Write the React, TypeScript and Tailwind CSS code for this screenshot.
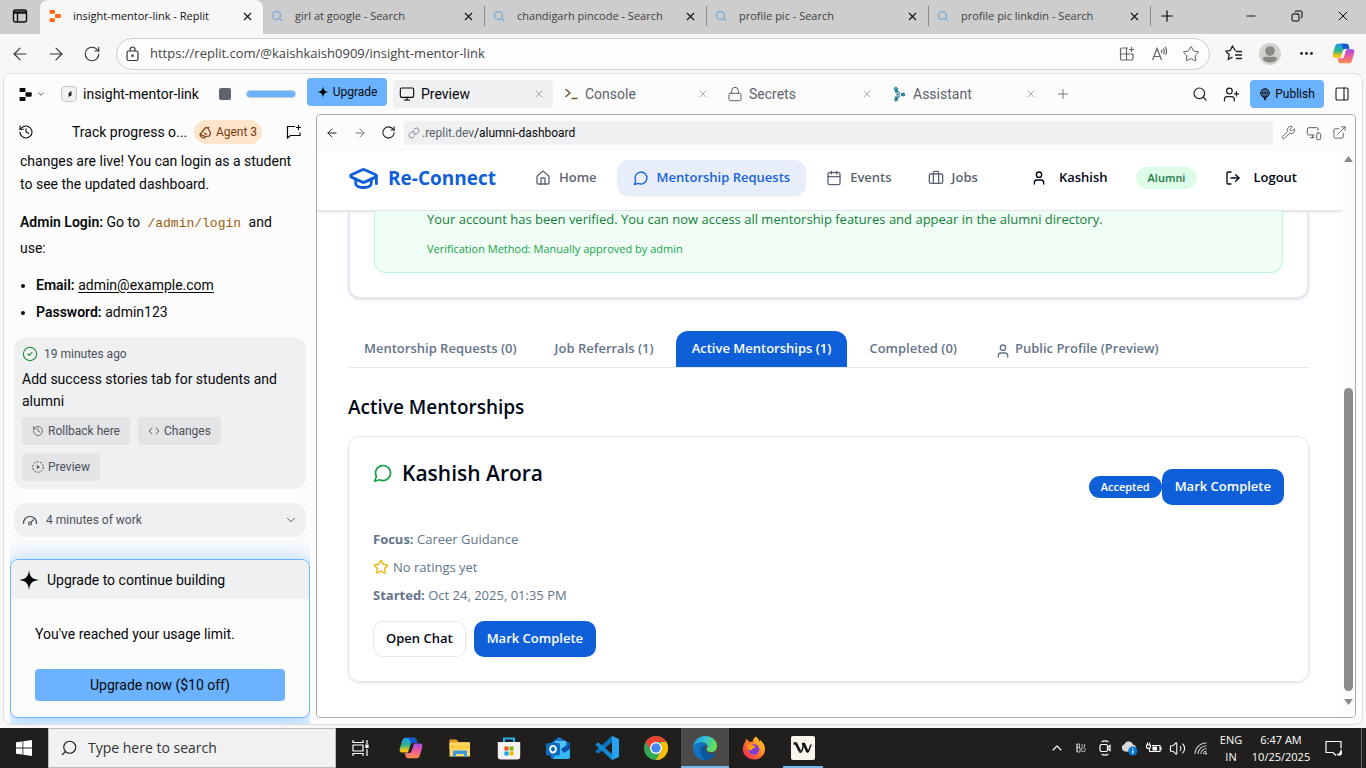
import React from "react";
import {
  ArrowLeft, ArrowRight, Briefcase, Calendar, ChevronDown, ChevronUp, Code, CircleCheck,
  ExternalLink, GraduationCap, History, House, Link, LogOut,
  Minus, Monitor, MonitorSmartphone, PanelRight, Plus, RotateCw, Search, Star, User, UserPlus, Wrench, X,
  Lock, Ellipsis, Volume2, Copy,
} from "lucide-react";

const Copilot = ({ size = 24, id }: { size?: number; id: string }) => (
  <svg width={size} height={size} viewBox="0 0 24 24" aria-hidden="true">
    <defs>
      <linearGradient id={id + "a"} x1="0" y1="0" x2="0" y2="1">
        <stop offset="0" stopColor="#1b9cf0" /><stop offset="0.5" stopColor="#2fb58a" /><stop offset="0.85" stopColor="#f2c518" />
      </linearGradient>
      <linearGradient id={id + "b"} x1="0" y1="0" x2="0" y2="1">
        <stop offset="0" stopColor="#a14be8" /><stop offset="0.5" stopColor="#ee5a9b" /><stop offset="1" stopColor="#fb9149" />
      </linearGradient>
    </defs>
    <path d="M15 1.800c1.300 0 2 .9 2.400 2.200l.9 3h-4.500c-1.400 0-2 .7-2.400 2L9 16.500H3.200C.9 16.500.2 14.600.8 12.500l2.400-8C3.800 2.600 5 1.800 6.700 1.800z" fill={`url(#${id}a)`} />
    <path d="M14.500 1.800c1.600 0 2.400.7 2.900 2.200l.9 3h-4.500c-.8 0-1.500.4-1.900 1L11 4.500c-.4-1.500-1.200-2.700-3-2.700z" fill="#1455d0" />
    <path d="M9 22.200c-1.300 0-2-.9-2.400-2.200l-.9-3h4.500c1.400 0 2-.7 2.400-2L15 7.500h5.800c2.300 0 3 1.900 2.400 4l-2.400 8c-.6 1.900-1.800 2.700-3.500 2.700z" fill={`url(#${id}b)`} />
  </svg>
);

const Spark = ({ size = 12 }: { size?: number }) => (
  <svg width={size} height={size} viewBox="0 0 24 24" aria-hidden="true">
    <path d="M12 0c.9 8 3.500 11 12 12-8.500 1-11.100 4-12 12-.9-8-3.500-11-12-12C8.500 11 11.100 8 12 0z" fill="currentColor" />
  </svg>
);

const ReplitMark = ({ size = 13, color = "#0e1525" }: { size?: number; color?: string }) => (
  <svg width={size} height={size} viewBox="0 0 24 24" aria-hidden="true" fill={color}>
    <rect x="1" y="0" width="11" height="7.500" rx="1.500" />
    <rect x="12" y="8" width="11.500" height="8" rx="1.500" />
    <rect x="1" y="16.500" width="11" height="7.500" rx="1.500" />
  </svg>
);

const ChatBubble = ({ size = 16, color = "currentColor" }: { size?: number; color?: string }) => (
  <svg width={size} height={size} viewBox="0 0 24 24" fill="none" stroke={color} strokeWidth="2" strokeLinecap="round" strokeLinejoin="round" aria-hidden="true">
    <path d="M7.900 20A9 9 0 1 0 4 16.100L2 22Z" />
  </svg>
);

const VerticalTabs = () => (
  <svg width="16" height="16" viewBox="0 0 16 16" fill="none" stroke="#111" aria-hidden="true">
    <rect x="1.500" y="2" width="13" height="12" rx="2" strokeWidth="1.400" />
    <path d="M2 5h12M5.500 5v9" strokeWidth="1.400" /><path d="M2 4h12" strokeWidth="1.500" />
  </svg>
);

const ring = "focus-visible:outline-2 focus-visible:outline-blue-500";

function BrowserTab({ title }: { title: string }) {
  return (
    <div className="flex w-[222px] shrink items-center">
      <div className="flex min-w-0 flex-1 items-center pl-2 pr-[9px]">
        <Search size={12} strokeWidth={3} color="#82aed6" className="shrink-0" />
        <span className="ml-3 min-w-0 flex-1 truncate text-[11px] text-[#3f3f3f]">{title}</span>
        <button aria-label={`Close ${title}`} className={ring}><X size={13} strokeWidth={2} color="#111" /></button>
      </div>
      <span className="h-5 w-px bg-[#8a8a8a]" />
    </div>
  );
}

function BrowserChrome() {
  return (
    <header className="shrink-0 font-['Open_Sans',sans-serif]">
      <div className="flex h-[34px] bg-[#cdcdcd] pb-0.5">
        <button aria-label="Tab actions" className={`flex w-10 items-center justify-center ${ring}`}><VerticalTabs /></button>
        <div className="-mb-0.5 flex w-[223px] items-center rounded-t-lg bg-[#f7f7f7] pb-0.5 pl-[9px] pr-[9px]">
          <ReplitMark size={12} color="#ff6a13" />
          <span className="ml-3 min-w-0 flex-1 truncate text-[11px] text-[#111]">insight-mentor-link - Replit</span>
          <button aria-label="Close tab" className={ring}><X size={13} strokeWidth={2} color="#111" /></button>
        </div>
        <BrowserTab title="girl at google - Search" />
        <BrowserTab title="chandigarh pincode - Search" />
        <BrowserTab title="profile pic - Search" />
        <BrowserTab title="profile pic linkdin - Search" />
        <button aria-label="New tab" className="flex w-8 items-center justify-center"><Plus size={18} strokeWidth={1.5} /></button>
        <div className="ml-auto flex">
          <button aria-label="Minimize" className="flex w-[46px] items-center justify-center"><Minus size={14} strokeWidth={1.5} /></button>
          <button aria-label="Restore" className="flex w-[46px] items-center justify-center"><Copy size={12} strokeWidth={2} className="-scale-x-100" /></button>
          <button aria-label="Close window" className="flex w-[46px] items-center justify-center"><X size={16} strokeWidth={1.4} /></button>
        </div>
      </div>
      <div className="flex h-[39px] items-center bg-[#f7f7f7] pl-0.5 pr-1 text-[#333]">
        <button aria-label="Back" className="flex w-9 justify-center"><ArrowLeft size={20} strokeWidth={1.4} /></button>
        <button aria-label="Forward" className="flex w-9 justify-center"><ArrowRight size={20} strokeWidth={1.4} /></button>
        <button aria-label="Reload" className="flex w-9 justify-center"><RotateCw size={18} strokeWidth={1.5} /></button>
        <div className="ml-1.5 flex h-8 min-w-0 flex-1 items-center rounded-full border border-[#cfcfcf] bg-[#fdfdfd] pl-2">
          <svg width="15" height="16" viewBox="0 0 15 16" fill="none" stroke="#333" strokeWidth="1.200" aria-hidden="true">
            <rect x="2" y="5" width="11" height="9.500" rx="1.800" /><path d="M5 5V3.500a2.500 2.500 0 0 1 5 0V5" /><circle cx="7.500" cy="9.700" r=".7" fill="#333" />
          </svg>
          <input aria-label="Address" defaultValue="https://replit.com/@kaishkaish0909/insight-mentor-link" className="ml-[10px] min-w-0 flex-1 bg-transparent text-[13px] text-[#444] outline-none" />
          <button aria-label="Split screen" className="flex w-8 justify-center">
            <svg width="16" height="16" viewBox="0 0 16 16" fill="none" stroke="#666" strokeWidth="1.200"><path d="M9 2H3a1.500 1.500 0 0 0-1.500 1.500v9A1.500 1.500 0 0 0 3 14h9.500a1.500 1.500 0 0 0 1.500-1.500V8H1.500M7.500 2v12M12.500 1v5M10 3.500h5" /></svg>
          </button>
          <button aria-label="Read aloud" className="flex w-8 justify-center">
            <svg width="17" height="16" viewBox="0 0 17 16" fill="none" stroke="#666" strokeWidth="1.200"><path d="M1.500 14L6 2.500 10.500 14M3 10.500h6M10 4c1 .7 1 2.300.3 3M12 2.500c1.600 1.300 1.600 4.200.5 5.500M14 1c2 2 2 6 .6 8" /></svg>
          </button>
          <button aria-label="Add to favorites" className="flex w-8 justify-center"><Star size={18} strokeWidth={1.3} color="#555" /></button>
          <span className="w-0.5" />
        </div>
        <button aria-label="Favorites" className="ml-1.5 flex w-9 justify-center">
          <svg width="18" height="17" viewBox="0 0 18 17" fill="none" stroke="#222" strokeWidth="1.300"><path d="M10.500 6L7.500 1 5.300 5.500.9 6.200l3.200 3.300-.8 4.900 4.200-2.200M11 6.500h6M10 10h7M11 13.500h6" /></svg>
        </button>
        <button aria-label="Profile" className="flex w-9 justify-center">
          <svg width="22" height="22" viewBox="0 0 22 22"><circle cx="11" cy="11" r="11" fill="#d4d2cf" /><circle cx="11" cy="8" r="4.800" fill="#8b8782" /><path d="M4 15.500c0-1 .8-1.700 1.800-1.700h10.400c1 0 1.800.7 1.800 1.700 0 2-3 4-7 4s-7-2-7-4z" fill="#8b8782" /></svg>
        </button>
        <button aria-label="Settings and more" className="flex w-9 justify-center"><Ellipsis size={17} strokeWidth={2.2} color="#222" /></button>
        <button aria-label="Copilot" className="flex w-[38px] justify-center"><Copilot size={23} id="cpa" /></button>
      </div>
    </header>
  );
}

function WorkspaceTab({ icon, label, active }: { icon: React.ReactNode; label: string; active?: boolean }) {
  return (
    <div className={`flex h-7 w-40 items-center rounded pl-1.5 pr-2 ${active ? "bg-[#eff0f2] text-[#07080a]" : "text-[#5d626b]"}`}>
      <span className="flex w-4 shrink-0 justify-center">{icon}</span>
      <span className="ml-1.5 flex-1 text-sm">{label}</span>
      <button aria-label={`Close ${label}`}><X size={12} strokeWidth={1.5} color="#8b8f96" /></button>
    </div>
  );
}

function WorkspaceHeader() {
  return (
    <div className="flex h-10 shrink-0 items-center">
      <div className="flex w-[303px] shrink-0 items-center pl-[15px]">
        <button aria-label="Replit menu" className="flex items-center">
          <ReplitMark size={13} color="#07080a" />
          <ChevronDown size={10} strokeWidth={2} color="#444" className="ml-1" />
        </button>
        <span className="ml-[15px] flex h-4 w-4 items-center justify-center rounded border border-[#c5c8cd] bg-[#f0f1f2]">
          <svg width="10" height="10" viewBox="0 0 10 10" aria-hidden="true"><path d="M1.500 3L6 2v6L2 7z" fill="#fff" /><path d="M4.500 4L7.500 2v4.500L4.500 8z" fill="#222" /></svg>
        </span>
        <span className="ml-1.5 w-[121px] text-sm text-[#07080a]">insight-mentor-link</span>
        <button aria-label="Stop" className="ml-[15px] h-3 w-3 rounded-xs bg-[#5d626b]" />
        <span className="ml-[15px] h-2 w-[50px] rounded-full border border-[#c3cad3] bg-[#6bb3ff]" />
      </div>
      <button className="mb-1 flex h-7 w-20 items-center justify-center gap-1 rounded bg-[#6bb3ff] text-xs text-[#07080a]"><Spark size={12} />Upgrade</button>
      <div className="ml-1.5 flex gap-1">
        <WorkspaceTab active label="Preview" icon={<Monitor size={16} strokeWidth={1.7} />} />
        <WorkspaceTab label="Console" icon={<svg width="14" height="12" viewBox="0 0 14 12" fill="none" stroke="#6b5a22" strokeWidth="1.400"><path d="M1.500 1l4.500 4-4.500 4M7.500 10.500h6" /></svg>} />
        <WorkspaceTab label="Secrets" icon={<Lock size={16} strokeWidth={1.5} />} />
        <WorkspaceTab label="Assistant" icon={
          <svg width="13" height="17" viewBox="0 0 13 17" fill="#2f8594" stroke="#2f8594"><path d="M1.500 1.500L4.500 2l1 3.500 6 3-6 3-1 3.500-3 .5V12l2-3.500-2-3.500z" stroke="none" /><circle cx="2.800" cy="2.800" r="1.500" fill="#49b3c4" /><circle cx="10.300" cy="8.500" r="1.500" /><circle cx="4.600" cy="8.500" r="1.700" stroke="#fcfcfc" strokeWidth=".9" /><path d="M7.500 5.500v6" stroke="#fcfcfc" strokeWidth=".9" /></svg>} />
      </div>
      <button aria-label="New workspace tab" className="ml-[10px]"><Plus size={16} strokeWidth={1.5} color="#777b82" /></button>
      <div className="ml-auto flex items-center pr-3 text-[#1c1e22]">
        <button aria-label="Search"><Search size={16} strokeWidth={1.8} /></button>
        <button aria-label="Invite" className="ml-[15px]"><UserPlus size={17} strokeWidth={1.7} /></button>
        <button className="ml-[10px] flex h-7 w-[74px] items-center justify-center gap-1 rounded bg-[#6bb3ff] text-xs text-[#07080a]">
          <svg width="12" height="13" viewBox="0 0 12 13" fill="none" stroke="#07080a" aria-hidden="true"><circle cx="6" cy="5" r="4.300" /><path d="M1.700 5h8.600M6 .7v11.600M3.500 5.500L6 12l2.500-6.500M4 1.500v4M8 1.500v4" strokeWidth=".9" /></svg>
          Publish
        </button>
        <button aria-label="Toggle panel" className="ml-[10px]"><PanelRight size={16} strokeWidth={1.7} /></button>
      </div>
    </div>
  );
}

const chip = "flex h-7 items-center gap-1 rounded bg-[#e3e4e6] px-[10px] text-xs text-[#4b5058]";

function AgentPanel() {
  return (
    <aside aria-label="Agent" className="flex w-[312px] shrink-0 flex-col overflow-hidden text-sm text-[#07080a]">
      <div className="flex h-9 shrink-0 items-center pl-3.5 pr-3.5">
        <button aria-label="History"><History size={16} strokeWidth={1.6} /></button>
        <span className="ml-[38px] w-[122px] truncate">Track progress o...</span>
        <span className="flex h-6 w-[68px] items-center justify-center gap-1 rounded-full bg-[#ffe4cc] text-xs text-[#733b0a]">
          <svg width="13" height="13" viewBox="0 0 13 13" fill="none" stroke="#733b0a" strokeWidth="1.200"><path d="M1 8.500L5.500 3C6 1.500 8 1 9 2.500l2.500 4-1 3.500-4 .5zM1 8.500c.5 2.500 2 3.500 4.500 3.500l1-1.500M9 2.500l1-1.500M5 7l3 1.500" /></svg>
          Agent 3
        </span>
        <button aria-label="New chat" className="ml-auto">
          <svg width="16" height="16" viewBox="0 0 16 16" fill="none" stroke="#07080a" strokeWidth="1.200"><path d="M9 2.500H1.500v11.500l3-2.500H14V8.500M12.500 1v5M10 3.500h5" /></svg>
        </button>
      </div>
      <div className="flex min-h-0 flex-1 flex-col px-[10px]">
        <div className="shrink-0 pl-1.5">
          <p className="w-[280px] leading-[23px]">changes are live! You can login as a student to see the updated dashboard.</p>
          <p className="mt-3.5 leading-[25px]"><b className="font-semibold">Admin Login:</b> Go to <code className="px-1 font-['Liberation_Mono',monospace] text-[13px] text-[#a05a0a]">/admin/login</code> and<br />use:</p>
          <ul className="mt-[11px] list-disc pl-4 leading-[27px]">
            <li><b className="font-semibold">Email:</b> <a href="mailto:admin@example.com" className="underline underline-offset-2">admin@example.com</a></li>
            <li><b className="font-semibold">Password:</b> admin123</li>
          </ul>
        </div>
        <section className="mt-[11px] shrink-0 rounded-xl bg-[#eff0f2] p-2">
          <div className="flex h-[18px] items-center gap-1.5 text-xs text-[#4b5058]"><CircleCheck size={16} strokeWidth={1.6} color="#1c8a34" />19 minutes ago</div>
          <p className="mb-[5px] mt-[5px] leading-[22px]">Add success stories tab for students and alumni</p>
          <div className="flex flex-wrap gap-2">
            <button className={chip}><History size={12} strokeWidth={1.6} />Rollback here</button>
            <button className={chip}><Code size={12} strokeWidth={1.8} />Changes</button>
            <button className={chip}>
              <svg width="12" height="12" viewBox="0 0 12 12" fill="none" stroke="#4b5058" aria-hidden="true"><circle cx="6" cy="6" r="5.300" strokeDasharray="2 1.300" /><path d="M4.800 4v4L8 6z" fill="#4b5058" stroke="none" /></svg>
              Preview
            </button>
          </div>
        </section>
        <button className="mt-3.5 flex h-[34px] shrink-0 items-center rounded-xl bg-[#eff0f2] px-2 text-xs text-[#4b5058]">
          <svg width="16" height="16" viewBox="0 0 16 16" fill="none" stroke="#4b5058" strokeWidth="1.200" aria-hidden="true"><path d="M1.500 12A6.500 6.500 0 0 1 8 4.500 6.500 6.500 0 0 1 14.500 12" /><circle cx="8" cy="11.500" r="1.500" /><path d="M9 10.300L11.500 7.500" /></svg>
          <span className="ml-2 flex-1 text-left">4 minutes of work</span><ChevronDown size={14} strokeWidth={1.6} />
        </button>
      </div>
      <div className="mx-1.5 shrink-0 overflow-hidden pb-1.5 pt-[22px]">
        <section className="overflow-hidden rounded-lg border border-[#6bb3ff] bg-[#fcfcfc] shadow-[0_4px_22px_4px_#6bb3ff90]">
          <h2 className="flex h-[39px] items-center gap-2 bg-[#eff0f2] pl-2"><Spark size={20} />Upgrade to continue building</h2>
          <div className="p-6 pb-4">
            <p className="leading-[22px]">You've reached your usage limit.</p>
            <button className="mt-6 h-8 w-full rounded bg-[#6bb3ff]">Upgrade now ($10 off)</button>
          </div>
        </section>
      </div>
    </aside>
  );
}

const navItem = "flex h-9 items-center gap-2 rounded-xl px-4";

function SiteNav() {
  return (
    <nav className="flex h-[61px] shrink-0 items-center justify-between border-b border-[#e2e6ee] bg-white pb-1 pl-[31px] pr-[33px] text-[13px] font-semibold text-[#5b6472] shadow-sm">
      <div className="flex items-center">
        <a href="#home" className="flex w-[171px] items-center gap-[9px] text-[19px] font-bold text-[#0f5fd9]"><GraduationCap size={31} strokeWidth={2.2} />Re-Connect</a>
        <div className="flex gap-1">
          <a href="#home" className={navItem}><House size={16} />Home</a>
          <a href="#mentorship" className={`${navItem} bg-[#e7eefa] text-[#1763da] shadow-xs`}><ChatBubble size={16} />Mentorship Requests</a>
          <a href="#events" className={navItem}><Calendar size={16} />Events</a>
          <a href="#jobs" className={navItem}><Briefcase size={16} />Jobs</a>
        </div>
      </div>
      <div className="flex items-center text-[#020817]">
        <button className="flex items-center gap-3"><User size={16} />Kashish</button>
        <span className="ml-7 rounded-full bg-[#dcfce7] px-3 text-[11px] leading-[22px] text-[#247a45]">Alumni</span>
        <button className="ml-7 flex items-center gap-3 pr-3"><LogOut size={16} />Logout</button>
      </div>
    </nav>
  );
}

const tab = "flex h-9 items-center rounded-t-xl px-4";
const primary = "h-9 rounded-[10px] bg-[#0f5fd9] px-[13px] text-[13px] font-semibold text-white";

function Dashboard() {
  return (
    <main className="min-h-0 flex-1 overflow-hidden pl-[31px] pr-[33px]">
      <section className="rounded-b-xl border-2 border-t-0 border-[#e2e8f0] px-6 pb-6 shadow-sm">
        <div className="rounded-b-xl border border-t-0 border-[#bbf7d0] bg-[#f0fdf4] pb-3.5 pl-[52px]">
          <p className="pb-[13px] text-[13px] leading-4 text-[#15803d]">Your account has been verified. You can now access all mentorship features and appear in the alumni directory.</p>
          <p className="text-[11px] leading-[18px] text-[#16a34a]">Verification Method: Manually approved by admin</p>
        </div>
      </section>
      <div role="tablist" className="mt-8 flex gap-1.5 border-b border-[#e2e8f0] text-[13px] font-semibold text-[#64748b]">
        <button role="tab" className={tab}>Mentorship Requests (0)</button>
        <button role="tab" className={tab}>Job Referrals (1)</button>
        <button role="tab" aria-selected="true" className={`${tab} bg-[#0f5fd9] text-white`}>Active Mentorships (1)</button>
        <button role="tab" className={tab}>Completed (0)</button>
        <button role="tab" className={`${tab} gap-1`}><User size={16} className="mt-1" />Public Profile (Preview)</button>
      </div>
      <h2 className="mt-[25px] text-[19px] font-semibold leading-7 text-[#020817]">Active Mentorships</h2>
      <article className="mt-[15px] rounded-xl border border-[#e2e8f0] px-6 pb-6 pt-[18px] shadow-sm">
        <div className="flex h-[70px] items-start justify-between">
          <h3 className="flex items-center gap-[9px] text-[21px] font-semibold leading-9 text-[#020817]"><ChatBubble size={20} color="#16a34a" />Kashish Arora</h3>
          <div className="mt-3.5 flex items-center">
            <span className="rounded-full bg-[#0f5fd9] px-3 text-[11px] font-semibold leading-[22px] text-white">Accepted</span>
            <button className={primary}>Mark Complete</button>
          </div>
        </div>
        <div className="text-[13px] leading-7 text-[#64748b]">
          <p><b>Focus:</b> Career Guidance</p>
          <p className="flex items-center gap-1"><Star size={16} color="#eab308" />No ratings yet</p>
          <p><b>Started:</b> Oct 24, 2025, 01:35 PM</p>
        </div>
        <div className="mt-3 flex gap-2">
          <button className="h-9 rounded-[10px] border border-[#e2e8f0] px-3 text-[13px] font-semibold text-[#020817]">Open Chat</button>
          <button className={primary}>Mark Complete</button>
        </div>
      </article>
    </main>
  );
}

function PreviewPane() {
  return (
    <section aria-label="Preview" className="mb-1.5 mr-1.5 flex min-w-0 flex-1 flex-col overflow-hidden rounded border border-[#a9abae]">
      <div className="flex h-[35px] shrink-0 items-center bg-[#fcfcfc] pl-2 pr-2 text-[#1c1e22]">
        <button aria-label="Preview back"><ArrowLeft size={14} strokeWidth={1.7} /></button>
        <button aria-label="Preview forward" className="ml-3.5"><ArrowRight size={14} strokeWidth={1.7} color="#777b82" /></button>
        <button aria-label="Preview reload" className="ml-3.5"><RotateCw size={15} strokeWidth={1.7} /></button>
        <div className="ml-2 flex h-6 min-w-0 flex-1 items-center rounded bg-[#eff0f2] pl-1 text-xs">
          <Link size={12} strokeWidth={1.8} color="#777b82" />
          <span className="ml-0.5 text-[#5d626b]">.replit.dev</span><span className="text-[#07080a]">/alumni-dashboard</span>
        </div>
        <div className="ml-2 flex gap-[10px] text-[#5d626b]">
          <button aria-label="Developer tools"><Wrench size={15} strokeWidth={1.5} /></button>
          <button aria-label="Device size"><MonitorSmartphone size={16} strokeWidth={1.5} /></button>
          <button aria-label="Open in new tab"><ExternalLink size={15} strokeWidth={1.5} /></button>
        </div>
      </div>
      <div className="flex min-h-0 flex-1 bg-white font-['Open_Sans',sans-serif]">
        <div className="flex min-w-0 flex-1 flex-col"><SiteNav /><Dashboard /></div>
        <div className="flex w-[13px] shrink-0 flex-col items-center bg-[#fcfcfc] py-1.5 text-[#8b8b8b]" aria-hidden="true">
          <svg width="9" height="6" viewBox="0 0 9 6"><path d="M4.500 0L9 6H0z" fill="currentColor" /></svg>
          <span className="grow-[226]" />
          <span className="w-[9px] grow-[302] rounded-full bg-[#8b8b8b]" />
          <span className="h-2" />
          <svg width="9" height="6" viewBox="0 0 9 6"><path d="M4.500 6L9 0H0z" fill="currentColor" /></svg>
          <span className="h-1.5" />
        </div>
      </div>
    </section>
  );
}

const Explorer = () => (
  <svg width="24" height="24" viewBox="0 0 24 24"><path d="M1.500 3.500h7l2 2.500h11v4h-20z" fill="#e6a21a" /><path d="M1.500 6.500h20.500v14H1.500z" fill="#ffd76a" /><path d="M5 14.500h14v6.500h-3v-3H8v3H5z" fill="#3b9be0" /><path d="M1.500 9h20.500v4H1.500z" fill="#ffcb45" /></svg>
);
const Store = () => (
  <svg width="24" height="24" viewBox="0 0 24 24"><path d="M7 7V2.500h10V7" fill="none" stroke="#27b1ec" strokeWidth="2" /><path d="M.8 6h22.400v14.500a3 3 0 0 1-3 3H3.800a3 3 0 0 1-3-3z" fill="#f3f3f3" /><path d="M7.500 10.500h4v4h-4z" fill="#f25022" /><path d="M12.500 10.500h4v4h-4z" fill="#7fba00" /><path d="M7.500 15.500h4v4h-4z" fill="#00a4ef" /><path d="M12.500 15.500h4v4h-4z" fill="#ffb900" /></svg>
);
const Outlook = () => (
  <svg width="24" height="24" viewBox="0 0 24 24"><path d="M5 7l8-6 10 6v14a2 2 0 0 1-2 2H7a2 2 0 0 1-2-2z" fill="#1a6fd0" /><path d="M9 5h11v9H9z" fill="#4cc2f5" /><path d="M13 14l11-7v14a2 2 0 0 1-2 2H7z" fill="#35b8f1" /><path d="M15 13l9-6v6l-6 4z" fill="#0b4fa8" /><rect y="7" width="14" height="12.500" rx="1.500" fill="#0f6cbd" /><ellipse cx="7" cy="13.200" rx="2.900" ry="3.300" fill="none" stroke="#fff" strokeWidth="1.900" /></svg>
);
const VsCode = () => (
  <svg width="24" height="24" viewBox="0 0 24 24"><path d="M17 0l7 3v18l-7 3z" fill="#29a3f0" /><path d="M17 0v6L3.200 17.700.3 15.200z" fill="#0b74bd" /><path d="M17 24v-6L3.200 6.300.3 8.800z" fill="#1489d4" /></svg>
);
const Chrome = () => (
  <svg width="24" height="24" viewBox="0 0 24 24"><circle cx="12" cy="12" r="12" fill="#34a853" /><path d="M1.600 6A12 12 0 0 1 22.400 6H12L7 15z" fill="#ea4335" /><path d="M22.400 6A12 12 0 0 1 12 24l5-9V6z" fill="#fbbc05" /><circle cx="12" cy="12" r="6" fill="#fff" /><circle cx="12" cy="12" r="4.700" fill="#4285f4" /></svg>
);
const Edge = () => (
  <svg width="24" height="24" viewBox="0 0 24 24">
    <defs><linearGradient id="eg" x1="0" y1="0" x2="1" y2=".3"><stop offset="0" stopColor="#1b8fe0" /><stop offset=".5" stopColor="#2fc2d8" /><stop offset="1" stopColor="#66dd5a" /></linearGradient></defs>
    <path d="M12 0c7 0 12 4.500 12 10 0 4-3 6-6 6-2.500 0-4.500-1-4.500-2.500 0-1 1-1.200 1-3C14.500 8 12 6.500 9 6.500 5 6.500 1 9 0 13 0 5 5 0 12 0z" fill="url(#eg)" />
    <path d="M0 12.500C.5 9 4 6.500 8.500 6.500c3.500 0 5.500 2 5.900 3.500C10 8.500 7.500 11 7.500 14.500c0 5 5 9 12 5.500-2 3-5 4-7.500 4C5 24 0 19 0 12.500z" fill="#1173c4" />
    <path d="M7.500 14.500c0-3 2-5 5-5.500-2 2-.5 9 6.500 9 1.500 0 3-.5 3.800-.7C20 22 17 24 13 24c-3.500-1.500-5.500-5.500-5.500-9.500z" fill="#0c56a0" />
  </svg>
);
const Firefox = () => (
  <svg width="24" height="24" viewBox="0 0 24 24">
    <defs><linearGradient id="ff" x1="1" y1="0" x2="0" y2="1"><stop offset="0" stopColor="#ffe226" /><stop offset=".5" stopColor="#ff7a2c" /><stop offset="1" stopColor="#e8185c" /></linearGradient></defs>
    <path d="M14 .5c1.500 1.500 3 3 3.500 5 1-.5 1-1.500 1-1.500 3 3 4.500 6 4.500 9.500C23 19 18 23.500 12 23.500S.8 19 .8 13C.8 10 2 7.500 3.500 5.500L4 2.500 7.500 6c1-.3 2-.2 3 .2 0-2 1.500-4.500 3.500-5.700z" fill="url(#ff)" />
    <circle cx="12" cy="13.500" r="5.200" fill="#7b3fd6" /><path d="M5 9.500c2-1.500 5.500-1 7 .5 1.500 0 2 .8 1 1.500-2 .5-3 1-3 2.500-2 1-5-1-5-4.500z" fill="#ff9a1f" />
  </svg>
);
const WApp = () => (
  <svg width="24" height="24" viewBox="0 0 24 24"><rect width="24" height="24" rx="2" fill="#faf4ec" /><path d="M2.500 7.500h2.500L9 15.500" fill="none" stroke="#111" strokeWidth="2.600" /><path d="M8.500 16c2 .8 2.500-.5 4-7.500" fill="none" stroke="#111" strokeWidth="1.400" /><path d="M11 8h2l3.500 8" fill="none" stroke="#111" strokeWidth="2.600" /><path d="M16 16c3 .5 2-6 4.500-7.500" fill="none" stroke="#111" strokeWidth="1.400" /></svg>
);

function Taskbar() {
  const apps = [
    { name: "Copilot", icon: <Copilot size={24} id="cpb" /> },
    { name: "File Explorer", icon: <Explorer /> },
    { name: "Microsoft Store", icon: <Store /> },
    { name: "Outlook", icon: <Outlook /> },
    { name: "Visual Studio Code", icon: <VsCode /> },
    { name: "Chrome", icon: <Chrome /> },
    { name: "Edge", icon: <Edge />, state: "active" },
    { name: "Firefox", icon: <Firefox /> },
    { name: "Workspace", icon: <WApp />, state: "open" },
  ];
  const cell = "flex w-6 justify-center";
  return (
    <footer className="flex h-10 shrink-0 items-stretch bg-[#201f1d] font-['Open_Sans',sans-serif] text-white">
      <button aria-label="Start" className="flex w-12 items-center justify-center">
        <svg width="16" height="16" viewBox="0 0 16 16" fill="#fff"><path d="M0 2.300L6.500 1.400V7.600H0zM7.300 1.300L16 0v7.600H7.300zM0 8.400h6.500v6.200L0 13.700zM7.300 8.400H16V16l-8.700-1.300z" /></svg>
      </button>
      <label className="flex w-72 items-center border border-[#bdbdbd] bg-[#f1f1f1] pl-[11px] text-[#222]">
        <Search size={18} strokeWidth={1.5} className="-scale-x-100" />
        <input aria-label="Search" placeholder="Type here to search" className="ml-[10px] min-w-0 flex-1 bg-transparent text-sm outline-none placeholder:text-[#333]" />
      </label>
      <button aria-label="Task view" className="flex w-12 items-center justify-center">
        <svg width="17" height="16" viewBox="0 0 17 16" fill="none" stroke="#fff" strokeWidth="1.200"><path d="M1 0v2.500h10V0M1 16v-2.500h10V16M1 5h10v6H1zM15 0v4M15 9v7" /><path d="M14 5h2v2.500h-2z" fill="#fff" /></svg>
      </button>
      <div className="ml-[3px] flex gap-px">
        {apps.map((a) => (
          <button key={a.name} aria-label={a.name} className={`flex w-12 shrink-0 flex-col items-center ${a.state === "active" ? "bg-[#4b4a49]" : ""}`}>
            <span className="mt-2">{a.icon}</span>
            {a.state && <span className={`mt-auto h-0.5 bg-[#76b9ed] ${a.state === "active" ? "w-full" : "w-10"}`} />}
          </button>
        ))}
      </div>
      <div className="ml-auto flex items-center">
        <button aria-label="Show hidden icons" className={cell}><ChevronUp size={16} strokeWidth={1.7} /></button>
        <span className={cell}>
          <svg width="10" height="10" viewBox="0 0 10 10" fill="none" stroke="#ccc" strokeWidth=".9"><path d="M1 1h2.500v3.500H1zM1 4.500h3V9H1zM1 1v8M6 1v3M8.500 1v3" /><circle cx="7.300" cy="6.800" r="2" /></svg>
        </span>
        <span className={cell}>
          <svg width="14" height="16" viewBox="0 0 14 16" fill="none" stroke="#fff" strokeWidth="1.200"><rect x="2" y="4.500" width="7.500" height="7" rx="1.500" /><path d="M9.500 7.500l2.500-2v5l-2.500-2M3.500 1.800c2-1 5-1 7 0M3.500 14.200c2 1 5 1 7 0" /></svg>
        </span>
        <span className={cell}>
          <svg width="17" height="15" viewBox="0 0 17 15"><path d="M4 10.500a3.700 3.700 0 0 1-.5-7.200A4.500 4.500 0 0 1 12 3.500c2 .3 3 2 3 3.500l-6 4z" fill="#d6d6d6" /><circle cx="11.800" cy="10" r="4.600" fill="#0a78d6" /><path d="M11.800 9.300v3.200M11.800 7.300v1" stroke="#fff" strokeWidth="1.200" /></svg>
        </span>
        <span className={cell}>
          <svg width="17" height="14" viewBox="0 0 17 14" fill="none" stroke="#fff" strokeWidth="1.100"><path d="M7 4.500h8v6H4.500V8M16 6v3" /><path d="M8 6h3.500v3H8z" fill="#fff" /><path d="M1.500 4h4v1.500a2 2 0 0 1-4 0zM2.500 4V1.500M4.500 4V1.500" /></svg>
        </span>
        <span className={cell}><Volume2 size={17} strokeWidth={1.5} /></span>
        <span className={cell}>
          <svg width="14" height="13" viewBox="0 0 14 13" fill="none" stroke="#ccc" strokeWidth="1.100"><path d="M1 12C1 6 6 1 12.500 1M4 12c0-4.500 4-8.300 8.500-8.300M6.800 12c0-3 2.700-5.500 5.700-5.500M9.500 12c0-1.500 1.500-3 3-3" /><circle cx="12" cy="11.500" r="1" fill="#fff" stroke="none" /></svg>
        </span>
        <div className="flex w-9 flex-col items-center text-[11px] leading-[17px]"><span>ENG</span><span>IN</span></div>
        <time className="flex w-16 flex-col items-center text-[11px] leading-[17px]"><span>6:47 AM</span><span>10/25/2025</span></time>
        <button aria-label="Notifications" className="flex w-10 justify-center">
          <svg width="17" height="17" viewBox="0 0 17 17" fill="none" stroke="#fff" strokeWidth="1.200"><path d="M8 12.500H1V1.500h15v7M8 12.500l3 3" /><path d="M15.500 9.500a3.200 3.200 0 1 1-4 4.500c2.200.3 4-1.500 4-4.500z" fill="#fff" stroke="none" /></svg>
        </button>
        <span className="ml-2 mr-1 h-10 w-px bg-[#6a6a6a]" />
      </div>
    </footer>
  );
}

export default function App() {
  return (
    <div className="flex h-screen flex-col overflow-hidden bg-[#f7f7f7] font-[Roboto,sans-serif]">
      <BrowserChrome />
      <div className="mx-[3px] mb-[3px] flex min-h-0 flex-1 flex-col overflow-hidden rounded-lg border border-[#dedede] bg-[#fcfcfc]">
        <WorkspaceHeader />
        <div className="flex min-h-0 flex-1"><AgentPanel /><PreviewPane /></div>
      </div>
      <Taskbar />
    </div>
  );
}
